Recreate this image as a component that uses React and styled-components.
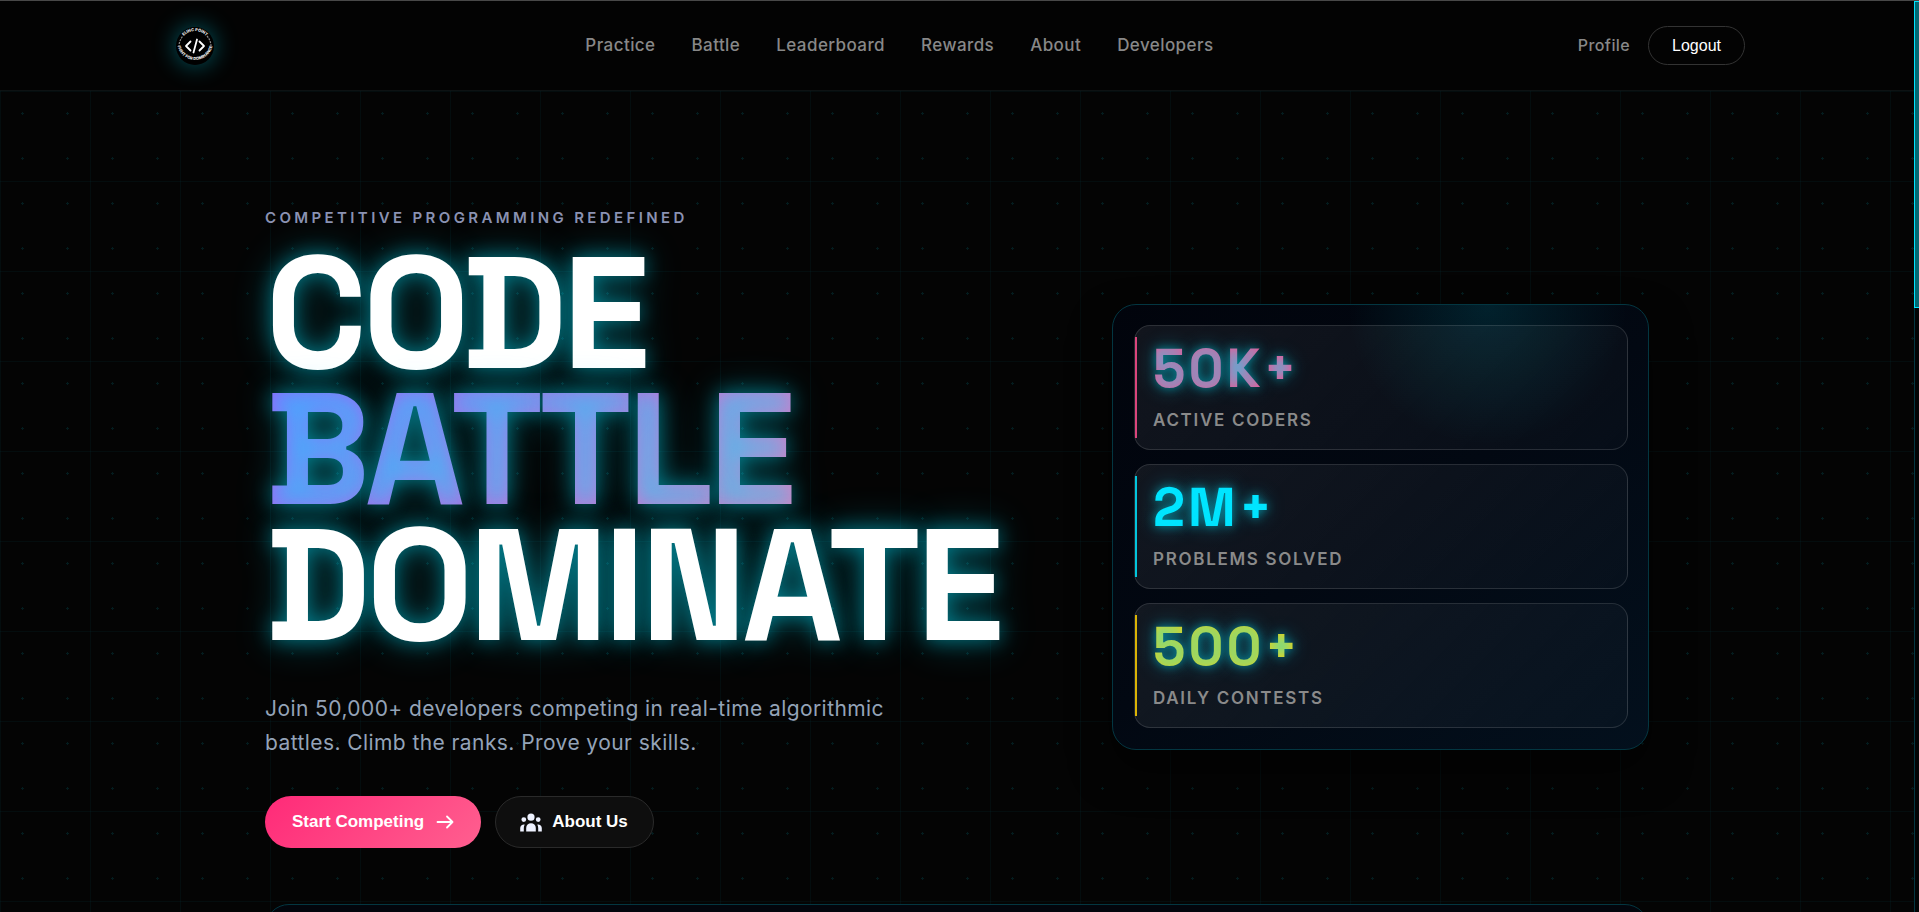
import React from "react";
import styled, { createGlobalStyle } from "styled-components";
import { HiUserGroup } from "react-icons/hi";

const navLinks = [
  "Practice",
  "Battle",
  "Leaderboard",
  "Rewards",
  "About",
  "Developers",
];

const stats = [
  { value: "50K+", label: "Active Coders", color: "#ff4d8d" },
  { value: "2M+", label: "Problems Solved", color: "#00e5ff" },
  { value: "500+", label: "Daily Contests", color: "#ffd000" },
];

function Logo() {
  return (
    <LogoLink href="#home" aria-label="Home">
      <svg width="38" height="38" viewBox="0 0 38 38">
        <defs>
          <path id="logo-top" d="M 4 19 A 15 15 0 0 1 34 19" />
          <path id="logo-bottom" d="M 1.3 17 A 17.8 17.8 0 0 0 36.7 17" />
        </defs>
        <circle cx="19" cy="19" r="18.5" fill="#000" />
        <LogoText>
          <textPath href="#logo-top" startOffset="50%" textAnchor="middle">
            ELINC POINT
          </textPath>
        </LogoText>
        <LogoText>
          <textPath href="#logo-bottom" startOffset="50%" textAnchor="middle">
            FIGHT FOR DOMINANCE
          </textPath>
        </LogoText>
        <g stroke="#888" strokeWidth="1.2" fill="none" strokeDasharray="2 1">
          <path d="M 3 20 A 16 16 0 0 1 7 9" />
          <path d="M 31 9 A 16 16 0 0 1 35 20" />
        </g>
        <g
          stroke="#fff"
          strokeWidth="1.8"
          fill="none"
          strokeLinecap="round"
          strokeLinejoin="round"
        >
          <path d="M 14.5 14.5 L 10 19 L 14.5 23.5" />
          <path d="M 23.5 14.5 L 28 19 L 23.5 23.5" />
          <path d="M 21 12.5 L 17.5 25.5" />
        </g>
      </svg>
    </LogoLink>
  );
}

function ArrowIcon() {
  return (
    <svg width="18" height="18" viewBox="0 0 18 18" aria-hidden="true">
      <path
        d="M 1.5 9 H 16.5 M 11 3.5 L 16.5 9 L 11 14.5"
        fill="none"
        stroke="currentColor"
        strokeWidth="1.8"
        strokeLinecap="round"
        strokeLinejoin="round"
      />
    </svg>
  );
}

function App() {
  return (
    <>
      <GlobalStyle />
      <Page>
        <Header>
          <HeaderInner>
            <Logo />
            <Nav>
              {navLinks.map((name) => (
                <NavLink key={name} href={`#${name.toLowerCase()}`}>
                  {name}
                </NavLink>
              ))}
            </Nav>
            <Account>
              <NavLink href="#profile" $small>
                Profile
              </NavLink>
              <LogoutButton type="button">Logout</LogoutButton>
            </Account>
          </HeaderInner>
        </Header>
        <Main>
          <Hero>
            <Intro>
              <Eyebrow>Competitive Programming Redefined</Eyebrow>
              <Title>
                <TitleLine>CODE</TitleLine>
                <TitleLine $gradient>BATTLE</TitleLine>
                <TitleLine>DOMINATE</TitleLine>
              </Title>
              <Description>
                Join 50,000+ developers competing in real-time algorithmic
                battles. Climb the ranks. Prove your skills.
              </Description>
              <Actions>
                <ActionButton type="button" $primary>
                  Start Competing
                  <ArrowIcon />
                </ActionButton>
                <ActionButton type="button">
                  <HiUserGroup size={24} color="#eef2ff" />
                  About Us
                </ActionButton>
              </Actions>
            </Intro>
            <StatsPanel>
              {stats.map((stat) => (
                <Stat key={stat.label} $color={stat.color}>
                  <StatValue $color={stat.color}>{stat.value}</StatValue>
                  <StatLabel>{stat.label}</StatLabel>
                </Stat>
              ))}
            </StatsPanel>
          </Hero>
          <NextPanel />
        </Main>
      </Page>
      <ScrollTrack aria-hidden="true">
        <ScrollThumb />
      </ScrollTrack>
    </>
  );
}

const GlobalStyle = createGlobalStyle`
  * {
    box-sizing: border-box;
  }
  html {
    height: 100%;
    overflow: hidden;
    background-color: #040404;
  }
  body {
    margin: 0;
    height: 100%;
    overflow: hidden;
    color: #fff;
    font-family: Inter, "Open Sans", sans-serif;
  }
`;

const Page = styled.div`
  min-height: 100vh;
  padding-right: 5px;
  border-top: 1px solid #484848;
  background-color: #040404;
  background-image: radial-gradient(
      circle closest-side,
      rgba(0, 229, 255, 0.1) 5%,
      transparent 6%
    ),
    linear-gradient(to right, rgba(0, 229, 255, 0.04) 1px, transparent 1px),
    linear-gradient(to bottom, rgba(0, 229, 255, 0.04) 1px, transparent 1px);
  background-size: 45px 45px, 90px 90px, 90px 90px;
`;

const Header = styled.header`
  background-color: #030303;
  border-bottom: 1px solid #0d1213;
`;
const HeaderInner = styled.div`
  display: flex;
  align-items: center;
  justify-content: space-between;
  max-width: 1576px;
  height: 89px;
  margin: 0 auto;
`;
const LogoLink = styled.a`
  display: flex;
  align-items: center;
  justify-content: center;
  width: 52px;

  svg {
    border-radius: 50%;
    box-shadow: 0 0 24px rgba(0, 229, 255, 0.4);
  }
`;
const LogoText = styled.text`
  fill: #eee;
  font-family: Inter, sans-serif;
  font-size: 4px;
  font-weight: 800;
`;
const Nav = styled.nav`
  display: flex;
  gap: 36px;
`;
const NavLink = styled.a`
  padding-bottom: 2px;
  color: #888;
  font-size: ${(props) => (props.$small ? "16px" : "17px")};
  font-weight: 500;
  line-height: 24px;
  letter-spacing: 0.025em;
  text-decoration: none;

  &:hover {
    color: #fff;
  }
`;
const Account = styled.div`
  display: flex;
  align-items: center;
  gap: 18px;
`;
const LogoutButton = styled.button`
  height: 39px;
  padding: 0 23px;
  border: 1px solid #333;
  border-radius: 20px;
  background: transparent;
  color: #fff;
  font-family: "Liberation Sans", Arial, sans-serif;
  font-size: 16px;
  cursor: pointer;
`;

const Main = styled.main`
  max-width: 1384px;
  margin: 0 auto;
  padding-top: 115px;
`;
const Hero = styled.section`
  display: grid;
  grid-template-columns: 1fr 537px;
  align-items: center;
  margin-bottom: 56px;
`;
const Intro = styled.div`
  display: flex;
  flex-direction: column;
  align-items: flex-start;
`;
const Eyebrow = styled.p`
  margin: 0 0 16px;
  color: #8b92b3;
  font-size: 15px;
  font-weight: 600;
  line-height: 23px;
  letter-spacing: 0.225em;
  text-transform: uppercase;
`;
const Title = styled.h1`
  margin: 0 0 39px;
  font-family: "Space Grotesk", Roboto, sans-serif;
  font-size: 159px;
  font-weight: 700;
  line-height: 136px;
  letter-spacing: -5px;
  text-shadow: 0 0 20px rgba(0, 229, 255, 0.45),
    0 0 40px rgba(0, 229, 255, 0.3);
`;
const TitleLine = styled.span`
  display: block;
  color: ${(props) => (props.$gradient ? "transparent" : "#fff")};
  background: ${(props) =>
    props.$gradient
      ? "linear-gradient(135deg, #9a5cff 0%, #ff85a8 100%)"
      : "none"};
  background-clip: ${(props) => (props.$gradient ? "text" : "border-box")};
`;
const Description = styled.p`
  max-width: 640px;
  margin: 0 0 36px;
  color: #94a3b8;
  font-size: 21px;
  line-height: 34px;
  letter-spacing: 0.02em;
`;
const Actions = styled.div`
  display: flex;
  gap: 14px;
`;
const ActionButton = styled.button`
  display: flex;
  align-items: center;
  gap: ${(props) => (props.$primary ? "12px" : "9px")};
  height: 52px;
  padding: ${(props) => (props.$primary ? "0 26px" : "0 25px 0 23px")};
  border: 1px solid ${(props) => (props.$primary ? "transparent" : "#2a2a2a")};
  border-radius: 26px;
  background: ${(props) =>
    props.$primary
      ? "linear-gradient(135deg, #ff2a78, #ff5f8f) border-box"
      : "#0e0e0e"};
  color: #fff;
  font-family: "Liberation Sans", Arial, sans-serif;
  font-size: 17px;
  font-weight: 700;
  cursor: pointer;
`;

const StatsPanel = styled.div`
  display: flex;
  flex-direction: column;
  gap: 14px;
  padding: 20px 20px 21px 21px;
  border: 1px solid #033641;
  border-radius: 24px;
  background: radial-gradient(
      circle 140px at 70% 0,
      rgba(0, 229, 255, 0.12),
      transparent
    ),
    linear-gradient(145deg, #01040c, #020812 50%, #03101d);
  box-shadow: 0 20px 40px rgba(0, 0, 0, 0.6);
`;
const Stat = styled.div`
  position: relative;
  height: 125px;
  padding: 16px 18px;
  border: 1px solid rgba(255, 255, 255, 0.12);
  border-radius: 16px;
  background: linear-gradient(
    135deg,
    rgba(255, 255, 255, 0.07),
    rgba(255, 255, 255, 0.02)
  );

  &::before {
    content: "";
    position: absolute;
    top: 11px;
    bottom: 11px;
    left: 0;
    width: 2px;
    background: ${(props) => props.$color};
    opacity: 0.85;
  }
`;
const StatValue = styled.div`
  color: transparent;
  background: ${(props) => props.$color};
  background-clip: text;
  font-family: "Space Grotesk", Roboto, sans-serif;
  font-size: 54px;
  font-weight: 700;
  line-height: 54px;
  letter-spacing: 3px;
  text-shadow: 0 0 10px rgba(0, 229, 255, 0.5),
    0 0 20px rgba(0, 229, 255, 0.4);
`;
const StatLabel = styled.div`
  margin-top: 12px;
  color: #8a8a8a;
  font-size: 17px;
  font-weight: 600;
  line-height: 24px;
  letter-spacing: 0.1em;
  text-transform: uppercase;
`;

const NextPanel = styled.section`
  height: 120px;
  border: 1px solid #033641;
  border-radius: 24px;
  background-color: #02050c;
`;

const ScrollTrack = styled.div`
  position: fixed;
  top: 1px;
  right: 0;
  bottom: 0;
  width: 5px;
  border-left: 1px solid #033641;
  background-color: #020405;
`;
const ScrollThumb = styled.div`
  height: 307px;
  margin-left: -1px;
  border: 1px solid #00e5ff;
  border-right: none;
  background-color: #046872;
`;

export default App;
